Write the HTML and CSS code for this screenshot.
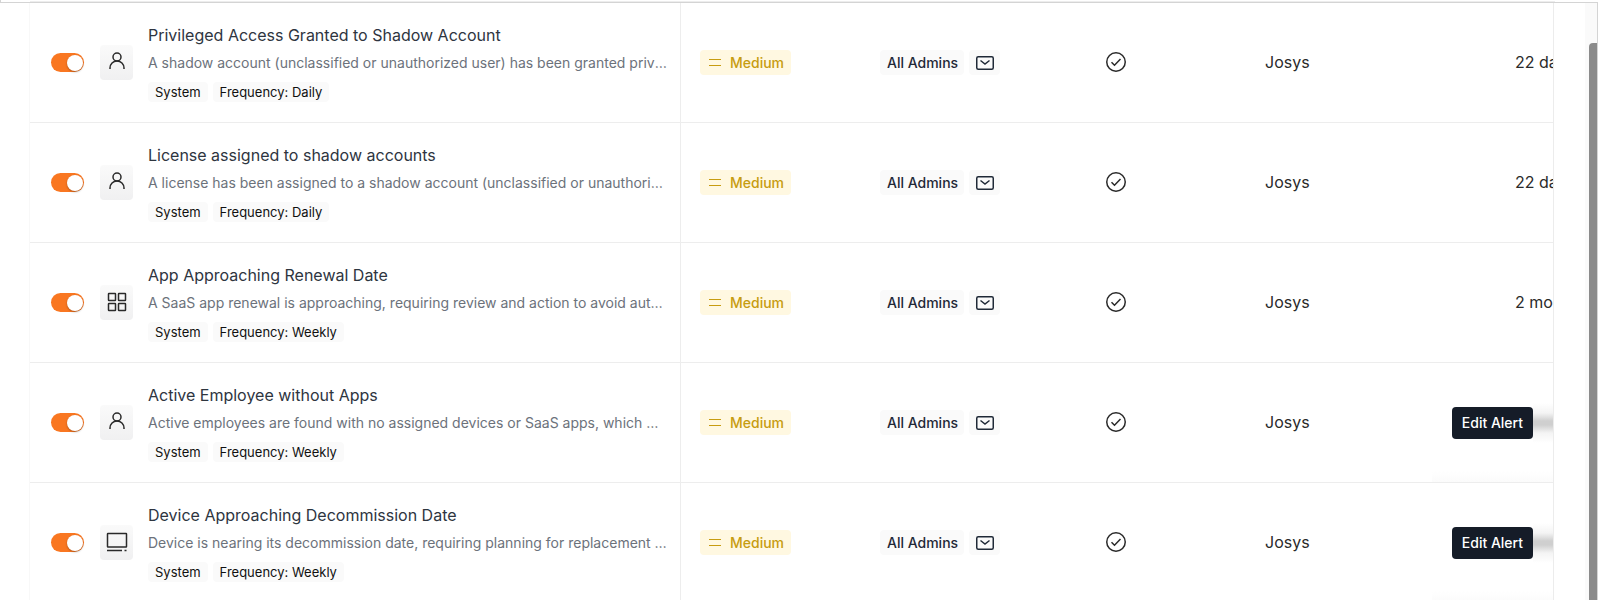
FILE: index.html
```html
<!DOCTYPE html>
<html lang="en">
<head>
    <meta charset="UTF-8">
    <meta name="viewport" content="width=device-width, initial-scale=1.0">
    <title>Alerts</title>
    <link rel="stylesheet" href="styles.css">
</head>
<body>
    <!-- Shared icons -->
    <svg class="sprite" aria-hidden="true">
        <symbol id="icon-user" viewBox="0 0 18 18">
            <circle cx="9" cy="5" r="4"/>
            <path d="M2 17v-1a7 7 0 0 1 14 0v1"/>
        </symbol>
        <symbol id="icon-apps" viewBox="0 0 20 20">
            <rect x="1.500" y="1.500" width="7" height="7" rx="0.500"/>
            <rect x="11.500" y="1.500" width="7" height="7" rx="0.500"/>
            <rect x="1.500" y="11.500" width="7" height="7" rx="0.500"/>
            <rect x="11.500" y="11.500" width="7" height="7" rx="0.500"/>
        </symbol>
        <symbol id="icon-device" viewBox="0 0 22 20">
            <rect x="1.500" y="1.500" width="19" height="13.500" rx="0.500"/>
            <path d="M1 18.500h15M18.500 18.500h2"/>
        </symbol>
        <symbol id="icon-equal" viewBox="0 0 12 7">
            <path d="M0 0.500h12M0 6.500h12"/>
        </symbol>
        <symbol id="icon-mail" viewBox="0 0 18 14">
            <rect x="0.750" y="0.750" width="16.500" height="12.500" rx="1.500"/>
            <path d="M4.500 4.500L9 8l4.500-3.500"/>
        </symbol>
        <symbol id="icon-check" viewBox="0 0 20 20">
            <circle cx="10" cy="10" r="9.250"/>
            <path d="M5.500 10.300l3 3 6-6.300"/>
        </symbol>
    </svg>

    <div class="panel-top"></div>
    <div class="panel">
        <main class="content">
            <div class="table-wrap">
                <table class="alerts">
                    <colgroup>
                        <col class="col-alert">
                        <col class="col-severity">
                        <col class="col-notify">
                        <col class="col-status">
                        <col class="col-owner">
                        <col class="col-date">
                    </colgroup>
                    <tbody>
                        <tr>
                            <td>
                                <div class="alert-item">
                                    <input type="checkbox" class="switch" aria-labelledby="alert1" checked>
                                    <span class="alert-icon"><svg class="icon-18"><use href="#icon-user"/></svg></span>
                                    <div class="alert-text">
                                        <h3 id="alert1">Privileged Access Granted to Shadow Account</h3>
                                        <p>A shadow account (unclassified or unauthorized user) has been granted privileges</p>
                                        <div class="tags"><span class="tag">System</span><span class="tag">Frequency: Daily</span></div>
                                    </div>
                                </div>
                            </td>
                            <td><span class="severity"><svg><use href="#icon-equal"/></svg>Medium</span></td>
                            <td><div class="notify"><span class="chip">All Admins</span><span class="chip"><svg><use href="#icon-mail"/></svg></span></div></td>
                            <td><svg class="check"><use href="#icon-check"/></svg></td>
                            <td>Josys</td>
                            <td>22 days ago</td>
                        </tr>
                        <tr>
                            <td>
                                <div class="alert-item">
                                    <input type="checkbox" class="switch" aria-labelledby="alert2" checked>
                                    <span class="alert-icon"><svg class="icon-18"><use href="#icon-user"/></svg></span>
                                    <div class="alert-text">
                                        <h3 id="alert2">License assigned to shadow accounts</h3>
                                        <p>A license has been assigned to a shadow account (unclassified or unauthorized)</p>
                                        <div class="tags"><span class="tag">System</span><span class="tag">Frequency: Daily</span></div>
                                    </div>
                                </div>
                            </td>
                            <td><span class="severity"><svg><use href="#icon-equal"/></svg>Medium</span></td>
                            <td><div class="notify"><span class="chip">All Admins</span><span class="chip"><svg><use href="#icon-mail"/></svg></span></div></td>
                            <td><svg class="check"><use href="#icon-check"/></svg></td>
                            <td>Josys</td>
                            <td>22 days ago</td>
                        </tr>
                        <tr>
                            <td>
                                <div class="alert-item">
                                    <input type="checkbox" class="switch" aria-labelledby="alert3" checked>
                                    <span class="alert-icon"><svg class="icon-20"><use href="#icon-apps"/></svg></span>
                                    <div class="alert-text">
                                        <h3 id="alert3">App Approaching Renewal Date</h3>
                                        <p>A SaaS app renewal is approaching, requiring review and action to avoid automatic</p>
                                        <div class="tags"><span class="tag">System</span><span class="tag">Frequency: Weekly</span></div>
                                    </div>
                                </div>
                            </td>
                            <td><span class="severity"><svg><use href="#icon-equal"/></svg>Medium</span></td>
                            <td><div class="notify"><span class="chip">All Admins</span><span class="chip"><svg><use href="#icon-mail"/></svg></span></div></td>
                            <td><svg class="check"><use href="#icon-check"/></svg></td>
                            <td>Josys</td>
                            <td>2 months ago</td>
                        </tr>
                        <tr>
                            <td>
                                <div class="alert-item">
                                    <input type="checkbox" class="switch" aria-labelledby="alert4" checked>
                                    <span class="alert-icon"><svg class="icon-18"><use href="#icon-user"/></svg></span>
                                    <div class="alert-text">
                                        <h3 id="alert4">Active Employee without Apps</h3>
                                        <p>Active employees are found with no assigned devices or SaaS apps, which may</p>
                                        <div class="tags"><span class="tag">System</span><span class="tag">Frequency: Weekly</span></div>
                                    </div>
                                </div>
                            </td>
                            <td><span class="severity"><svg><use href="#icon-equal"/></svg>Medium</span></td>
                            <td><div class="notify"><span class="chip">All Admins</span><span class="chip"><svg><use href="#icon-mail"/></svg></span></div></td>
                            <td><svg class="check"><use href="#icon-check"/></svg></td>
                            <td>Josys</td>
                            <td></td>
                            <td class="actions"><div class="actions-inner"><button type="button" class="edit-button">Edit Alert</button></div></td>
                        </tr>
                        <tr>
                            <td>
                                <div class="alert-item">
                                    <input type="checkbox" class="switch" aria-labelledby="alert5" checked>
                                    <span class="alert-icon"><svg class="icon-device"><use href="#icon-device"/></svg></span>
                                    <div class="alert-text">
                                        <h3 id="alert5">Device Approaching Decommission Date</h3>
                                        <p>Device is nearing its decommission date, requiring planning for replacement or renewal</p>
                                        <div class="tags"><span class="tag">System</span><span class="tag">Frequency: Weekly</span></div>
                                    </div>
                                </div>
                            </td>
                            <td><span class="severity"><svg><use href="#icon-equal"/></svg>Medium</span></td>
                            <td><div class="notify"><span class="chip">All Admins</span><span class="chip"><svg><use href="#icon-mail"/></svg></span></div></td>
                            <td><svg class="check"><use href="#icon-check"/></svg></td>
                            <td>Josys</td>
                            <td></td>
                            <td class="actions"><div class="actions-inner"><button type="button" class="edit-button">Edit Alert</button></div></td>
                        </tr>
                    </tbody>
                </table>
            </div>
        </main>
        <div class="scrollbar"><div class="thumb"></div></div>
    </div>
</body>
</html>
```
FILE: styles.css
```css
* {
    box-sizing: border-box;
}

body {
    display: flex;
    flex-direction: column;
    margin: 0;
    padding-right: 2px;
    height: 100vh;
    overflow: hidden;
    background: #fff;
    color: #2a2a2a;
    font-family: Inter, sans-serif;
    font-size: 16px;
}

.sprite {
    position: absolute;
    width: 0;
    height: 0;
}

svg {
    display: block;
    fill: none;
    stroke: currentColor;
    stroke-width: 1.5;
}

.panel-top {
    flex: none;
    height: 2px;
    padding: 1px 43px 0 29px;
    border-left: 1px solid #d4d4d4;
}

.panel-top::before {
    content: "";
    display: block;
    height: 1px;
    background: #ededed;
}

.panel {
    display: flex;
    flex: 1;
    min-height: 0;
    border-top: 1px solid #d4d4d4;
    border-right: 1px solid #d4d4d4;
}

.content {
    flex: 1;
    min-width: 0;
    padding: 0 31px 0 29px;
}

.table-wrap {
    overflow: hidden;
    border-left: 1px solid #f8f8f8;
    border-right: 1px solid #ececec;
}

/* Table */
.alerts {
    width: 1670px;
    table-layout: fixed;
    border-collapse: separate;
    border-spacing: 0;
}

.col-alert { width: 651px; }
.col-severity { width: 179px; }
.col-notify { width: 226px; }
.col-status { width: 159px; }
.col-owner { width: 250px; }
.col-date { width: 205px; }

.alerts td {
    height: 120px;
    padding: 0 20px;
    border-bottom: 1px solid #ededed;
    vertical-align: middle;
    white-space: nowrap;
}

.alerts td:first-child {
    padding: 0 12px 0 21px;
    border-right: 1px solid #ededed;
}

.alerts td:nth-child(2) {
    padding-left: 19px;
}

.alerts td:nth-child(n+4) {
    padding-bottom: 2px;
}

.alert-item {
    display: flex;
    align-items: center;
}

.alert-icon {
    display: flex;
    flex: none;
    justify-content: center;
    width: 33px;
    height: 35px;
    margin: 0 15px 0 16px;
    padding-top: 7px;
    border-radius: 4px;
    background: linear-gradient(#fafafa, #f0f0f1);
}

.icon-18 {
    width: 18px;
    height: 18px;
}

.icon-20 {
    width: 20px;
    height: 20px;
}

.icon-device {
    width: 22px;
    height: 20px;
}

.alert-text {
    flex: 1;
    min-width: 0;
    padding-bottom: 3px;
}

.alert-text h3 {
    margin: 0;
    color: #2e353f;
    font-size: 16px;
    font-weight: 400;
    line-height: 28px;
}

.alert-text p {
    margin: 0 0 5px;
    overflow: hidden;
    color: #6c727b;
    font-size: 14px;
    line-height: 28px;
    text-overflow: ellipsis;
}

.tags {
    display: flex;
    gap: 5px;
}

.tag {
    padding: 0 7px;
    border-radius: 4px;
    background: #fafafa;
    color: #111;
    font-size: 13px;
    line-height: 20px;
}

/* Toggle */
.switch {
    appearance: none;
    display: flex;
    flex: none;
    justify-content: flex-end;
    align-items: center;
    width: 33px;
    height: 19px;
    margin: 0;
    padding: 1px;
    border-radius: 10px;
    background: #f97721;
    cursor: pointer;
}

.switch::before {
    content: "";
    width: 16px;
    height: 16px;
    border-radius: 50%;
    background: #fff;
    box-shadow: 0 1px 2px rgba(0, 0, 0, 0.3);
}

.switch:not(:checked) {
    justify-content: flex-start;
    background: #c4c4c4;
}

/* Chips */
.severity {
    display: inline-flex;
    align-items: center;
    gap: 9px;
    height: 25px;
    padding: 0 7px 0 9px;
    border-radius: 4px;
    background: #fff8e1;
    color: #c79c10;
    font-size: 14px;
    font-weight: 500;
}

.severity svg {
    width: 12px;
    height: 7px;
    stroke-width: 1;
}

.notify {
    display: flex;
    gap: 5px;
}

.chip {
    display: flex;
    align-items: center;
    height: 25px;
    padding: 0 6px 0 7px;
    border-radius: 4px;
    background: #fafafa;
    color: #1f2937;
    font-size: 14px;
    font-weight: 500;
}

.chip svg {
    width: 18px;
    height: 14px;
}

.check {
    width: 20px;
    height: 20px;
}

/* Row actions lie over the last column */
.alerts .actions {
    position: sticky;
    right: 0;
    width: 0;
    padding: 0;
    border: 0;
}

.actions-inner {
    position: absolute;
    top: 0;
    right: 0;
    display: flex;
    align-items: center;
    height: 119px;
    padding-left: 20px;
    background: linear-gradient(#fff 108px, #fbfbfb);
}

/* Soft trace of the date behind the button */
.actions-inner::after {
    content: "";
    width: 20px;
    height: 40px;
    background: linear-gradient(#fff, #f4f4f4 25%, #cfcfcf 45%, #cfcfcf 55%, #f4f4f4 75%, #fff);
}

.edit-button {
    height: 32px;
    padding: 0 10px;
    border: none;
    border-radius: 4px;
    background: #151c28;
    color: #fff;
    font-family: inherit;
    font-size: 14px;
    font-weight: 500;
    cursor: pointer;
}

.scrollbar {
    width: 12px;
    padding: 40px 0 0 4px;
    background: #fafafa;
}

.thumb {
    height: 100%;
    border-radius: 4px 0 0 0;
    background: #8b8b8b;
}
```
